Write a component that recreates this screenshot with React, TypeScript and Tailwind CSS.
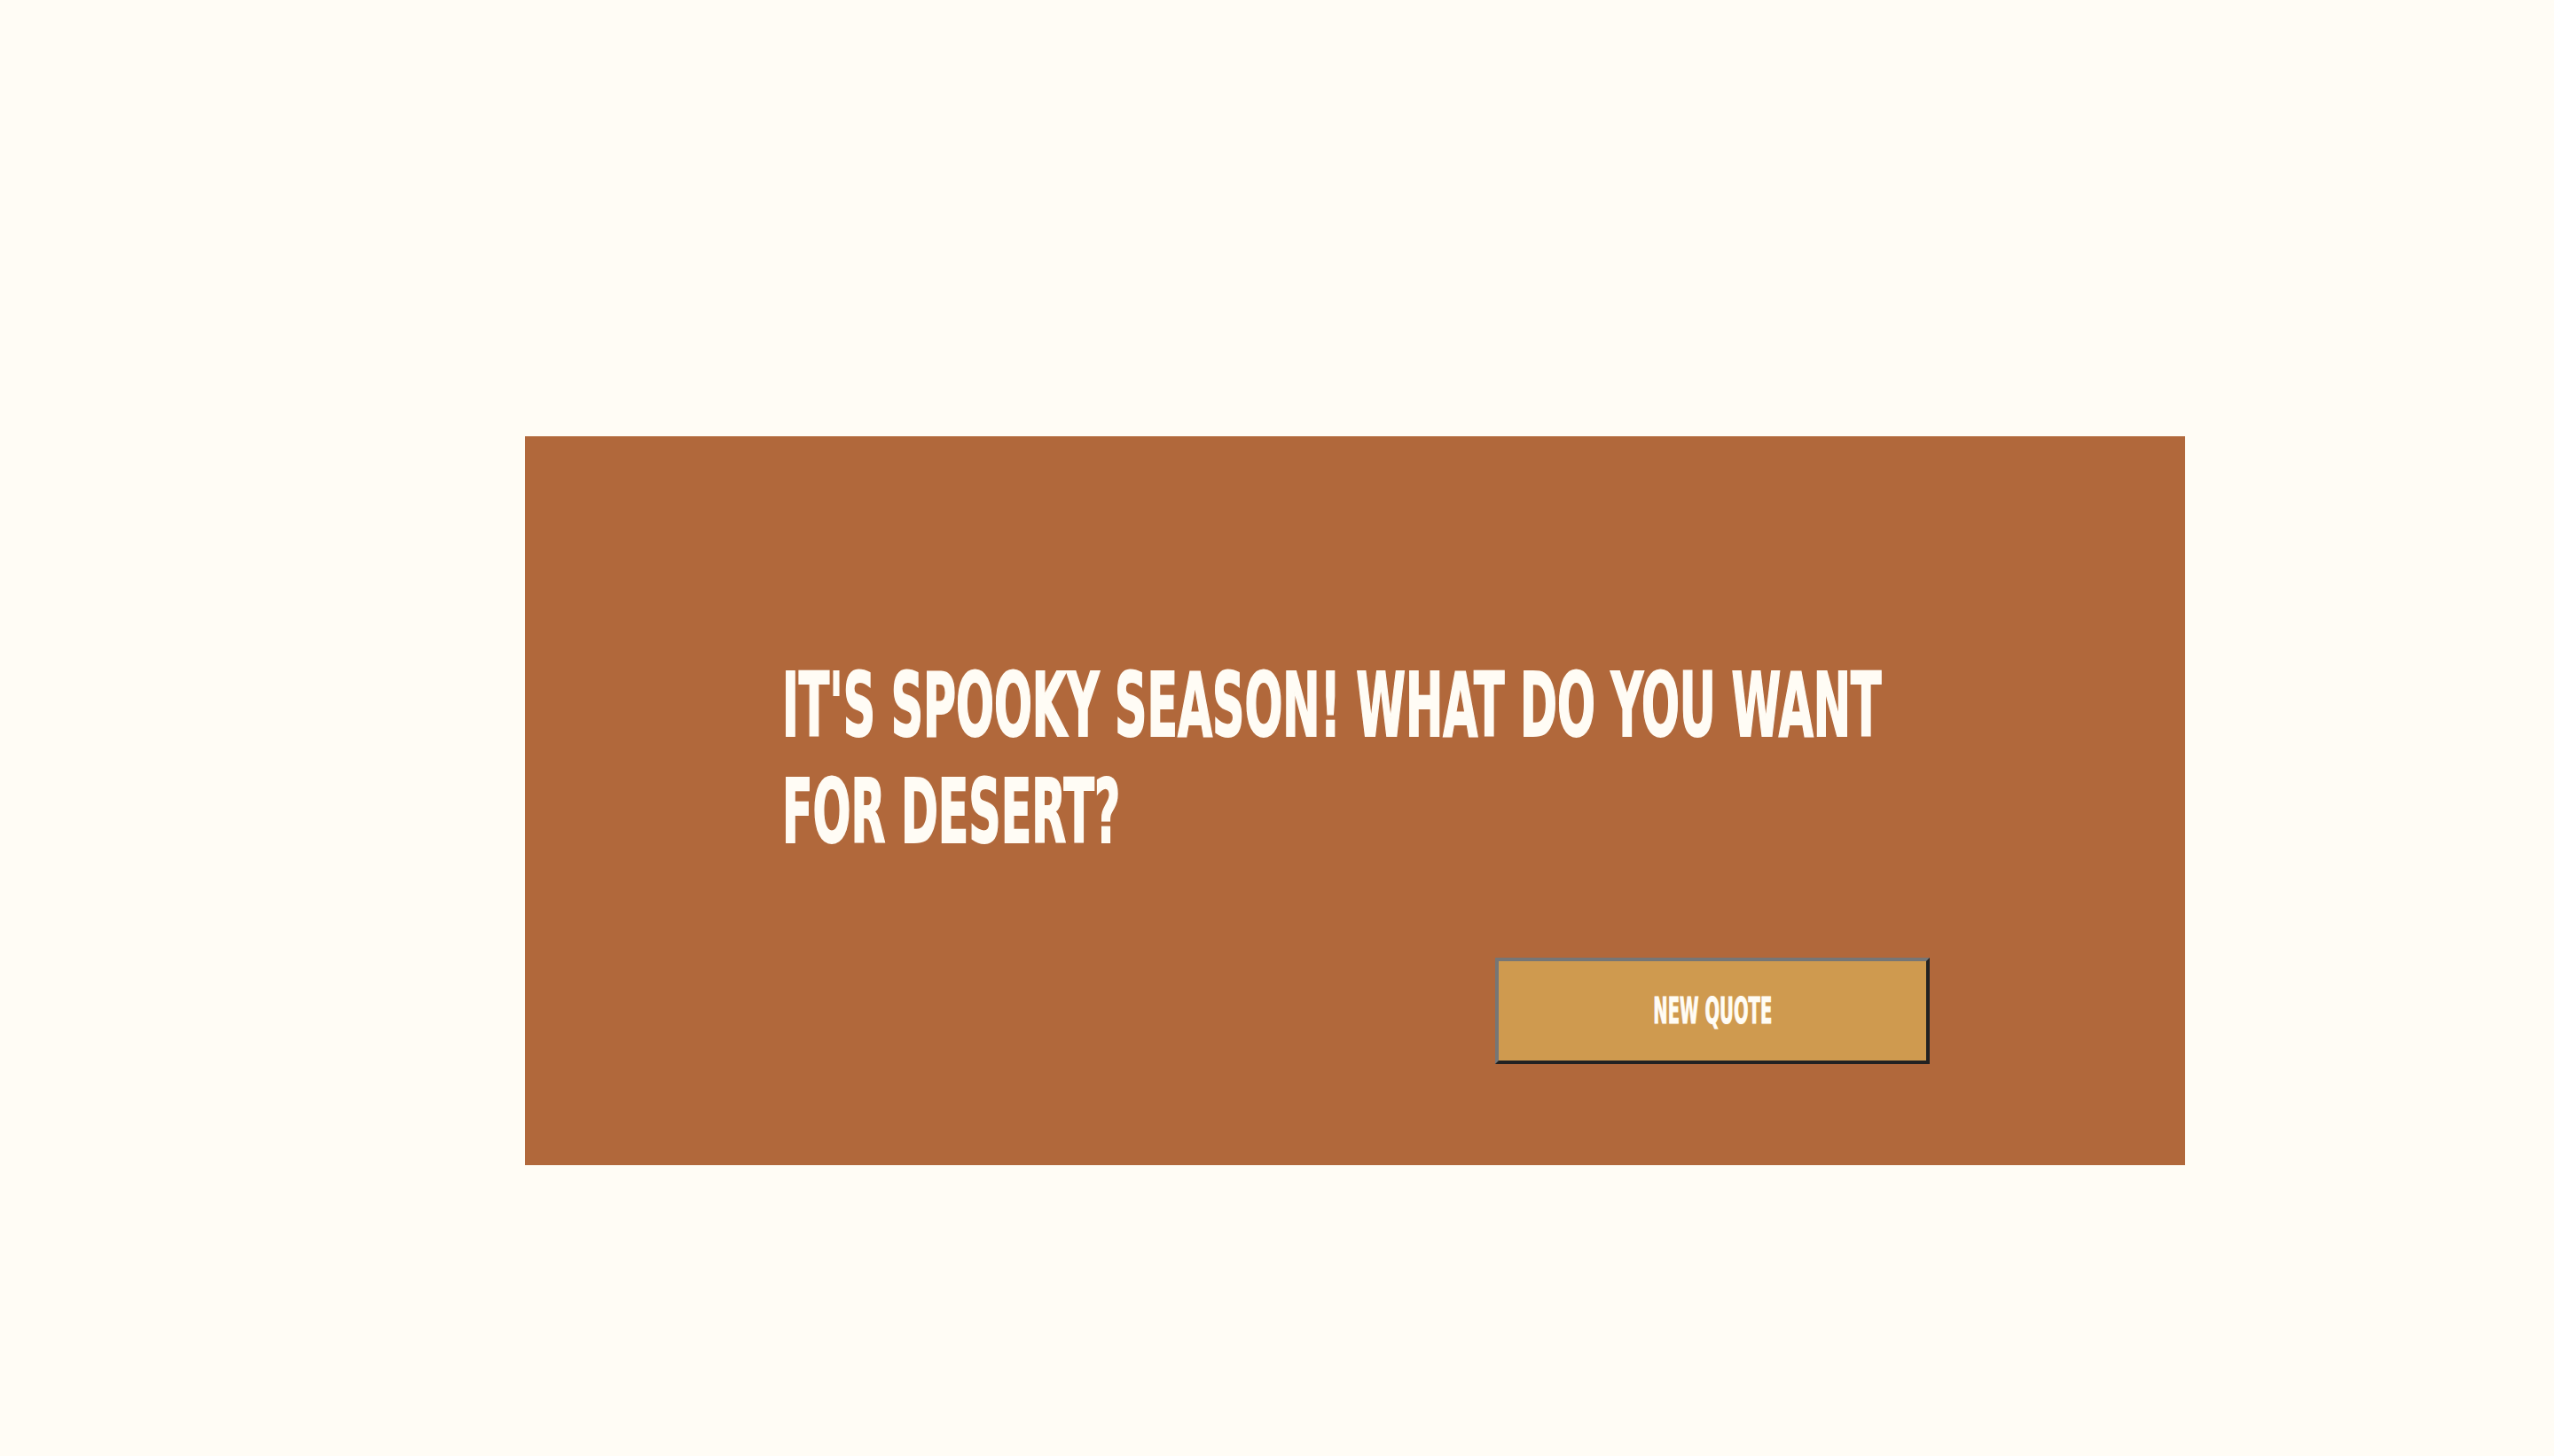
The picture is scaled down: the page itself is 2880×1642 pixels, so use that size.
export default function App() {
  return (
    <div className="min-h-[1642px] w-full bg-[#fffcf5] pt-[492px]">
      <div
        className="ml-[592px] h-[822px] w-[1872px] bg-[#b1683b] pl-[290px] pt-[244px]"
        style={{ fontFamily: '"Liberation Sans Narrow", "DejaVu Sans Condensed", "Liberation Sans", sans-serif' }}
      >
        <div className="w-[1294px]">
          <h1 className="origin-left scale-x-[0.567] whitespace-nowrap text-[99px] font-bold leading-[120px] text-[#fffcf5] [-webkit-text-stroke:2px_#fffcf5]">
            <span className="block">IT'S SPOOKY SEASON! WHAT DO YOU WANT</span>
            <span className="block">FOR DESERT?</span>
          </h1>
          <div className="mt-[104px] flex justify-end">
            <button className="flex h-[120px] w-[490px] items-center justify-center border-4 border-solid border-t-[#767676] border-l-[#767676] border-b-[#222222] border-r-[#222222] bg-[#cf9a4f]">
              <span className="inline-block scale-x-[0.53] whitespace-nowrap text-[41px] font-bold leading-none text-[#fffcf5] [-webkit-text-stroke:1px_#fffcf5]">
                NEW QUOTE
              </span>
            </button>
          </div>
        </div>
      </div>
    </div>
  );
}
